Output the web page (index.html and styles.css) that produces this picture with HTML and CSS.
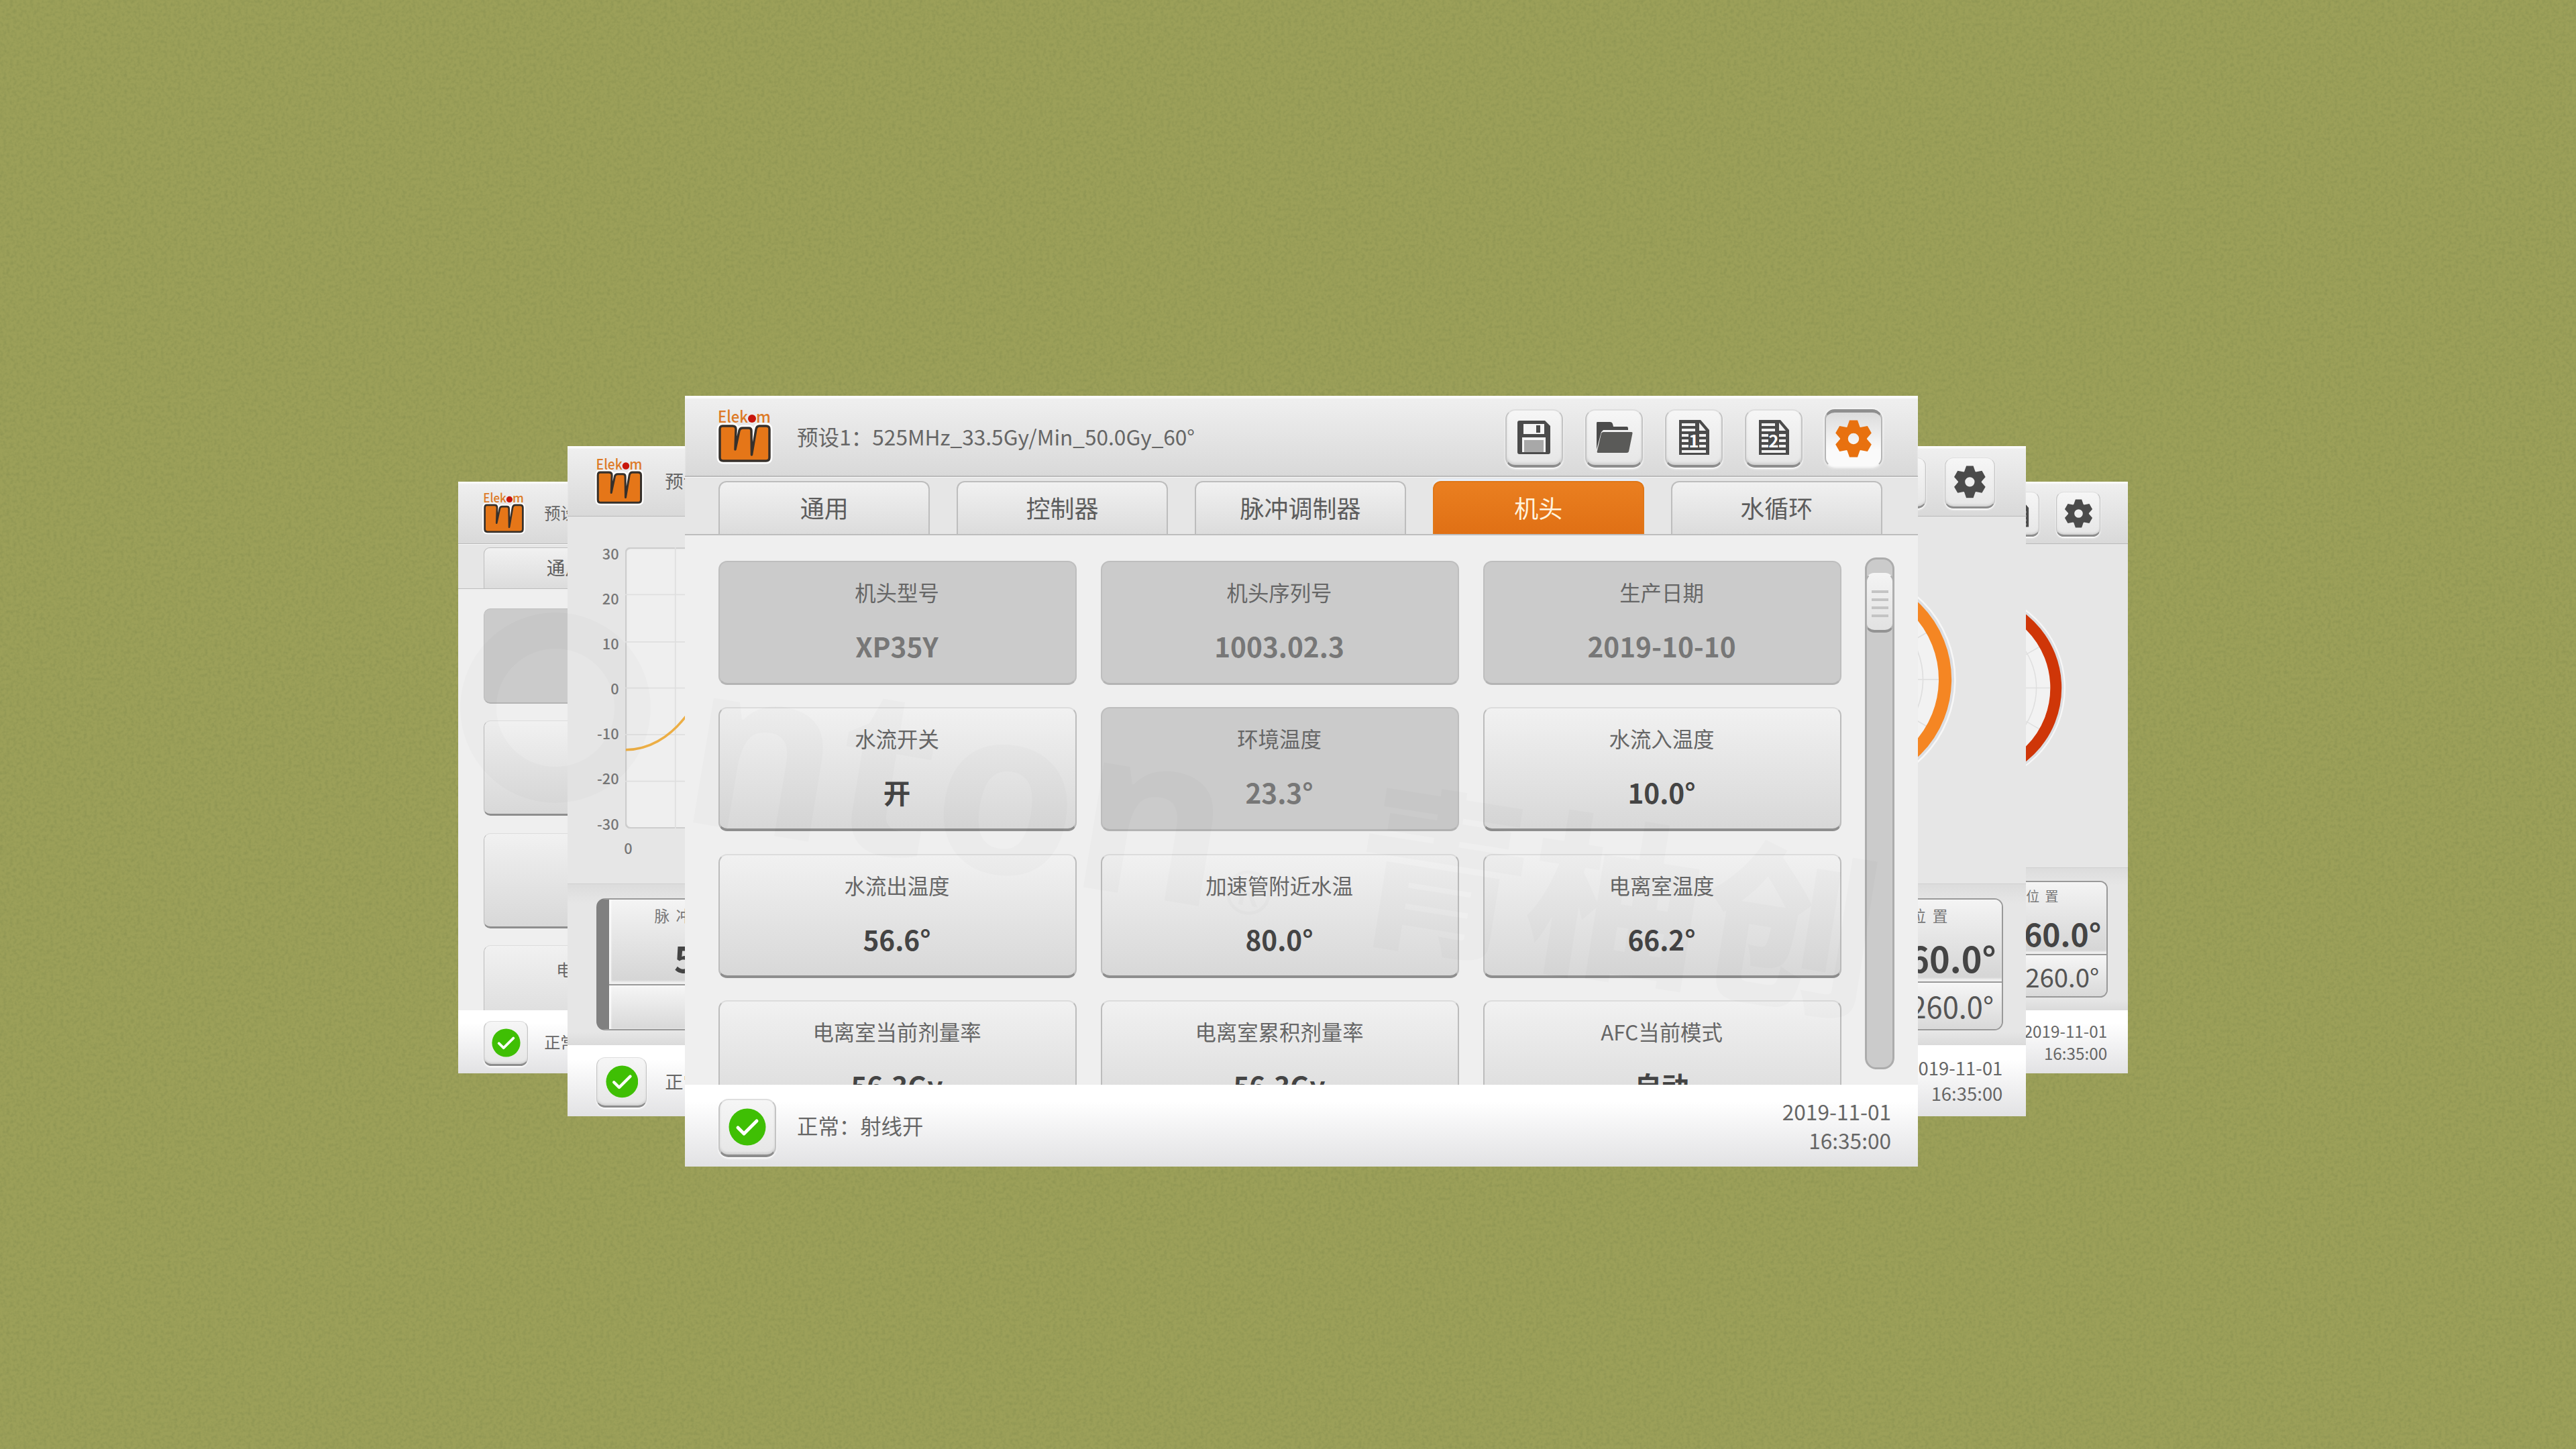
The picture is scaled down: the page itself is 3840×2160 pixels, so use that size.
FILE: index.html
```html
<!DOCTYPE html>
<html lang="zh-CN">
  <head>
    <meta charset="UTF-8" />
    <meta name="viewport" content="width=device-width, initial-scale=1.0" />
    <title>Elekom</title>
    <link rel="stylesheet" href="styles.css">
  </head>
  <body>
    <!-- icons -->
    <svg class="defs" width="0" height="0">
      <symbol id="logo" viewBox="-4 0 86 80" overflow="visible">
        <path d="M6 22H21Q26 22 26 27L25 57L31 29Q32 25 36 25H45Q49 25 49 29L49.500 65L56 27Q57 22 61 22H71Q76 22 76 27V69Q76 74 71 74H7Q2 74 2 69V27Q2 22 6 22Z" fill="none" stroke="#fff" stroke-width="9" stroke-linejoin="round" />
        <path d="M6 22H21Q26 22 26 27L25 57L31 29Q32 25 36 25H45Q49 25 49 29L49.500 65L56 27Q57 22 61 22H71Q76 22 76 27V69Q76 74 71 74H7Q2 74 2 69V27Q2 22 6 22Z" fill="#e57618" stroke="#36302b" stroke-width="3.500" stroke-linejoin="round" />
        <circle cx="50" cy="11" r="6" fill="#c8160c" />
      </symbol>
      <symbol id="save" viewBox="0 0 56 56">
        <path d="M6 3H44L52 11V50Q52 53 49 53H6Q3 53 3 50V6Q3 3 6 3Z" fill="#4b4b4b" />
        <path d="M12 8H43V23H12Z" fill="#f4f4f4" />
        <rect x="31" y="10" width="6" height="11" fill="#4b4b4b" />
        <rect x="10" y="28" width="35" height="22" fill="#f4f4f4" />
        <rect x="13" y="32" width="29" height="18" fill="#a8a8a8" />
      </symbol>
      <symbol id="folder" viewBox="0 0 56 56">
        <path d="M3 5H22Q25 5 26 8L27 12H47Q49 12 49 15V17H12L9 20L2 46V7Q2 5 3 5Z" fill="#4b4b4b" />
        <path d="M12 20H54Q56 20 55.500 22L50 49Q49.500 51 47 51H4Q2 51 3 48L9 22Q10 20 12 20Z" fill="#5a5a58" />
      </symbol>
      <symbol id="doc" viewBox="0 0 56 56">
        <path d="M6 2H38L51 17V54H6Z" fill="#4b4b4b" />
        <path d="M10 7H30V11H10ZM10 15H30V19H10ZM10 23H46V27H10ZM10 31H46V35H10ZM10 39H46V43H10ZM10 47H46V51H10Z" fill="#f1f1f1" />
        <path d="M36 6V18H46Z" fill="#f1f1f1" />
        <path d="M20 22H36V44H20Z" fill="#4b4b4b" />
      </symbol>
      <symbol id="gear" viewBox="-28 -28 56 56">
        <circle r="14" fill="none" stroke="currentColor" stroke-width="11.500" />
        <g fill="currentColor">
          <path id="tooth" d="M-10 -16L-6 -27.500H6L10 -16Z" />
          <use href="#tooth" transform="rotate(60)" />
          <use href="#tooth" transform="rotate(120)" />
          <use href="#tooth" transform="rotate(180)" />
          <use href="#tooth" transform="rotate(240)" />
          <use href="#tooth" transform="rotate(300)" />
        </g>
      </symbol>
      <symbol id="ok" viewBox="0 0 56 56">
        <circle cx="28" cy="28" r="27.500" fill="#3fbf04" />
        <path d="M14 29L23 38L42 19" fill="none" stroke="#fff" stroke-width="5" stroke-linecap="round" stroke-linejoin="round" />
      </symbol>
      <filter id="grain" x="0" y="0" width="100%" height="100%" color-interpolation-filters="sRGB">
        <feTurbulence type="fractalNoise" baseFrequency="0.200" numOctaves="2" seed="4" />
        <feColorMatrix values="0 0 0 0 .5  0 0 0 0 .54  0 0 0 0 .3  1.8 0 0 0 -.7" />
      </filter>
    </svg>

    <svg class="grain" width="3840" height="2160"><rect width="3840" height="2160" filter="url(#grain)" /></svg>

    <!-- back left: settings -->
    <section class="window window-back-left">
      <header class="topbar">
        <svg class="logo" viewBox="-4 0 86 80">
          <use href="#logo" x="-4" width="86" height="80" />
          <text x="-1" y="17" textLength="45" lengthAdjust="spacingAndGlyphs">Elek</text>
          <text x="56" y="17" textLength="22" lengthAdjust="spacingAndGlyphs">m</text>
        </svg>
        <p class="preset">预设</p>
      </header>
      <nav class="tabs">
        <a class="tab">通用</a>
      </nav>
      <div class="content">
        <div class="cards">
          <div class="card card-off"></div>
          <div class="card card-off"></div>
          <div class="card card-off"></div>
          <div class="card"></div>
          <div class="card"></div>
          <div class="card"></div>
          <div class="card"></div>
          <div class="card"></div>
          <div class="card"></div>
          <div class="card"><span class="label">电离室当前剂量率</span></div>
          <div class="card"></div>
          <div class="card"></div>
        </div>
      </div>
      <footer class="statusbar">
        <span class="btn"><svg><use href="#ok" /></svg></span>
        <p class="status">正常</p>
      </footer>
    </section>

    <!-- back right: gauge -->
    <section class="window window-back-right">
      <header class="topbar">
        <div class="tools">
          <span class="btn"><svg><use href="#doc" /></svg></span>
          <span class="btn"><svg><use href="#gear" /></svg></span>
        </div>
      </header>
      <div class="monitor monitor-right">
        <svg class="gauge gauge-red" viewBox="-200 -200 400 400">
          <circle class="halo" r="188" />
          <circle class="dial" r="170" />
          <circle class="grid" r="133" />
          <path class="grid" d="M-160 0H160M-80 -139L80 139M-80 139L80 -139M-139 -80L139 80M-139 80L139 -80" />
          <circle class="ring" r="171" />
        </svg>
      </div>
      <div class="readouts">
        <div class="readout readout-right">
          <div class="actual"><span class="name">位置</span><b>60.0°</b></div>
          <div class="target">260.0°</div>
        </div>
      </div>
      <footer class="statusbar">
        <p class="clock">2019-11-01<br>16:35:00</p>
      </footer>
    </section>

    <!-- middle right: gauge -->
    <section class="window window-mid-right">
      <header class="topbar">
        <div class="tools">
          <span class="btn"><svg><use href="#doc" /></svg></span>
          <span class="btn"><svg><use href="#gear" /></svg></span>
        </div>
      </header>
      <div class="monitor monitor-right">
        <svg class="gauge gauge-orange" viewBox="-200 -200 400 400">
          <circle class="halo" r="188" />
          <circle class="dial" r="170" />
          <circle class="grid" r="133" />
          <path class="grid" d="M-160 0H160M-80 -139L80 139M-80 139L80 -139M-139 -80L139 80M-139 80L139 -80" />
          <circle class="ring" r="171" />
        </svg>
      </div>
      <div class="readouts">
        <div class="readout readout-right">
          <div class="actual"><span class="name">位置</span><b>60.0°</b></div>
          <div class="target">260.0°</div>
        </div>
      </div>
      <footer class="statusbar">
        <p class="clock">2019-11-01<br>16:35:00</p>
      </footer>
    </section>

    <!-- middle left: chart -->
    <section class="window window-mid-left">
      <header class="topbar">
        <svg class="logo" viewBox="-4 0 86 80">
          <use href="#logo" x="-4" width="86" height="80" />
          <text x="-1" y="17" textLength="45" lengthAdjust="spacingAndGlyphs">Elek</text>
          <text x="56" y="17" textLength="22" lengthAdjust="spacingAndGlyphs">m</text>
        </svg>
        <p class="preset">预设</p>
      </header>
      <div class="monitor">
        <div class="axis">
          <span>30</span><span>20</span><span>10</span><span>0</span><span>-10</span><span>-20</span><span>-30</span>
        </div>
        <div class="plot-col">
          <svg class="plot" width="700" height="482" viewBox="0 0 700 482">
            <rect x="1" y="1" width="698" height="480" rx="8" />
            <path class="grid" d="M0 81H700M0 162H700M0 241H700M0 321H700M0 401H700M86 0V482M171 0V482M256 0V482" />
            <path class="line" d="M1 347C40 347 75 326 102 292C125 266 150 230 180 190" />
          </svg>
          <span class="origin">0</span>
        </div>
      </div>
      <div class="readouts">
        <div class="readout">
          <div class="actual"><span class="name">脉冲</span><b>56.3</b></div>
          <div class="target"></div>
        </div>
      </div>
      <footer class="statusbar">
        <span class="btn"><svg><use href="#ok" /></svg></span>
        <p class="status">正常</p>
      </footer>
    </section>

    <!-- front: settings -->
    <section class="window window-front">
      <header class="topbar">
        <svg class="logo" viewBox="-4 0 86 80">
          <use href="#logo" x="-4" width="86" height="80" />
          <text x="-1" y="17" textLength="45" lengthAdjust="spacingAndGlyphs">Elek</text>
          <text x="56" y="17" textLength="22" lengthAdjust="spacingAndGlyphs">m</text>
        </svg>
        <p class="preset">预设1：525MHz_33.5Gy/Min_50.0Gy_60°</p>
        <div class="tools">
          <span class="btn"><svg><use href="#save" /></svg></span>
          <span class="btn"><svg><use href="#folder" /></svg></span>
          <span class="btn"><svg><use href="#doc" /><text class="doc-no" x="28" y="43">1</text></svg></span>
          <span class="btn"><svg><use href="#doc" /><text class="doc-no" x="28" y="43">2</text></svg></span>
          <span class="btn btn-active"><svg><use href="#gear" /></svg></span>
        </div>
      </header>
      <nav class="tabs">
        <a class="tab">通用</a>
        <a class="tab">控制器</a>
        <a class="tab">脉冲调制器</a>
        <a class="tab tab-active">机头</a>
        <a class="tab">水循环</a>
      </nav>
      <div class="content">
        <div class="cards">
          <div class="card card-off"><span class="label">机头型号</span><span class="value">XP35Y</span></div>
          <div class="card card-off"><span class="label">机头序列号</span><span class="value">1003.02.3</span></div>
          <div class="card card-off"><span class="label">生产日期</span><span class="value">2019-10-10</span></div>
          <div class="card"><span class="label">水流开关</span><span class="value">开</span></div>
          <div class="card card-off"><span class="label">环境温度</span><span class="value">23.3°</span></div>
          <div class="card"><span class="label">水流入温度</span><span class="value">10.0°</span></div>
          <div class="card"><span class="label">水流出温度</span><span class="value">56.6°</span></div>
          <div class="card"><span class="label">加速管附近水温</span><span class="value">80.0°</span></div>
          <div class="card"><span class="label">电离室温度</span><span class="value">66.2°</span></div>
          <div class="card"><span class="label">电离室当前剂量率</span><span class="value">56.3Gy</span></div>
          <div class="card"><span class="label">电离室累积剂量率</span><span class="value">56.3Gy</span></div>
          <div class="card"><span class="label">AFC当前模式</span><span class="value">自动</span></div>
        </div>
        <div class="scrollbar">
          <div class="thumb"><i></i><i></i><i></i><i></i></div>
        </div>
      </div>
      <footer class="statusbar">
        <span class="btn"><svg><use href="#ok" /></svg></span>
        <p class="status">正常：射线开</p>
        <p class="clock">2019-11-01<br>16:35:00</p>
      </footer>
    </section>

    <!-- watermark -->
    <svg class="watermark" width="3840" height="2160">
      <circle cx="828" cy="1055" r="115" />
      <g transform="translate(1008 1222) rotate(9.400)">
        <text class="mark-latin" x="0" y="0">nton</text>
        <text class="mark-reg" x="822" y="0">®</text>
      </g>
      <text class="mark-cjk" transform="translate(2005 1380) rotate(9)">青柚创</text>
    </svg>
  </body>
</html>
```
FILE: styles.css
```css
body {
  position: relative;
  width: 3840px;
  height: 2160px;
  margin: 0;
  overflow: hidden;
  background: #9ca059;
  color: #666;
  font-family: "Noto Sans CJK SC", sans-serif;
}

p {
  margin: 0;
}

.defs {
  position: absolute;
}

.grain,
.watermark {
  position: absolute;
  top: 0;
  left: 0;
}

.grain {
  opacity: 0.5;
}

/* windows */
.window {
  position: absolute;
  display: flex;
  flex-direction: column;
  width: 1838px;
  height: 1149px;
  overflow: hidden;
  background: #efefef;
}

.window-front {
  left: 1021px;
  top: 590px;
}

.window-mid-left,
.window-mid-right {
  top: calc(665px / 0.8695);
  zoom: 0.8695;
  background: #e6e6e6;
}

.window-mid-left {
  left: calc(846px / 0.8695);
}

.window-mid-right {
  left: calc(1422px / 0.8695);
}

.window-back-left,
.window-back-right {
  top: calc(718px / 0.7676);
  zoom: 0.7676;
}

.window-back-left {
  left: calc(683px / 0.7676);
}

.window-back-right {
  left: calc(1761px / 0.7676);
  background: #e6e6e6;
}

/* top bar */
.topbar {
  box-sizing: border-box;
  flex: none;
  display: flex;
  align-items: center;
  height: 121px;
  padding: 0 53px 0 46px;
  background: linear-gradient(#f0f0f0, #d9d9d9);
  border-bottom: 2px solid #b9b9b9;
  box-shadow: inset 0 4px 2px #fbfbfb;
}

.logo {
  width: 86px;
  height: 80px;
  margin-top: 7px;
  overflow: visible;
}

.logo text {
  font-size: 24px;
  font-weight: 500;
  fill: #dd7a26;
}

.preset {
  margin-left: 35px;
  font-size: 31.6px;
  line-height: 48px;
  white-space: nowrap;
}

.tools {
  display: flex;
  gap: 33px;
  margin-left: auto;
}

.btn {
  box-sizing: border-box;
  display: flex;
  align-items: center;
  justify-content: center;
  width: 86px;
  height: 87px;
  margin-top: 7px;
  padding-bottom: 1px;
  border: 2px solid #c4c4c4;
  border-top-color: #dedede;
  border-bottom: 4px solid #8d8d8d;
  border-radius: 15px;
  background: linear-gradient(#f6f6f6, #e6e6e6);
  box-shadow: 0 2px 3px #fff, inset 0 -3px 3px #d3d3d3;
  color: #4b4b4b;
}

.btn svg {
  width: 56px;
  height: 56px;
}

.btn-active {
  padding: 0 0 2px;
  border: 2px solid #b5b5b5;
  border-top: 5px solid #8f8f8f;
  border-bottom-color: #f4f4f4;
  background: linear-gradient(#dcdcdc, #fafafa 70%);
  box-shadow: 0 0 4px #fff;
  color: #e8710f;
}

.doc-no {
  font-size: 26px;
  font-weight: 700;
  text-anchor: middle;
  fill: #fff;
}

/* tabs */
.tabs {
  box-sizing: border-box;
  flex: none;
  display: flex;
  gap: 39.5px;
  height: 87px;
  padding: 5px 50px 0;
  background: #e6e6e6;
  border-top: 1px solid #f8f8f8;
  border-bottom: 2px solid #bdbdbd;
}

.tab {
  box-sizing: border-box;
  flex: none;
  width: 315.4px;
  border: 2px solid #bdbdbd;
  border-bottom: 0;
  border-radius: 12px 12px 0 0;
  background: linear-gradient(#f1f1f1, #dcdcdc);
  color: #5c5c5c;
  font-size: 36px;
  line-height: 74px;
  text-align: center;
}

.tab-active {
  border-color: #e07818;
  background: linear-gradient(#ea7f20, #e07015);
  box-shadow: 0 -3px 2px #e6effa;
  color: #fff3dd;
}

/* settings */
.content {
  flex: 1;
  display: flex;
  min-height: 0;
  overflow: hidden;
  padding: 38px 35px 0 50px;
}

.cards {
  flex: none;
  display: grid;
  grid-template-columns: repeat(3, 534px);
  grid-auto-rows: 185px;
  gap: 33.3px 36px;
  height: 0;
}

.card {
  box-sizing: border-box;
  display: flex;
  flex-direction: column;
  align-items: center;
  padding: 25px 2px 0 0;
  border: 2px solid #bcbcbc;
  border-top-color: #dcdcdc;
  border-bottom: 4px solid #8e8e8e;
  border-radius: 13px;
  background: linear-gradient(#f1f1f1, #d8d8d8);
}

.card-off {
  border: 2px solid #bebebe;
  border-bottom: 3px solid #b4b4b4;
  background: #cbcbcb;
}

.label {
  font-size: 31.4px;
  line-height: 40px;
}

.value {
  margin-top: 30px;
  color: #444;
  font-size: 40.5px;
  font-weight: 700;
  line-height: 60px;
}

.card-off .value {
  color: #777;
}

.scrollbar {
  box-sizing: border-box;
  width: 44px;
  height: 763px;
  margin: -5px 0 0 auto;
  padding-top: 20px;
  border: 3px solid #acacac;
  border-radius: 17px;
  background: #cbcbcb;
}

.thumb {
  box-sizing: border-box;
  display: flex;
  flex-direction: column;
  align-items: center;
  gap: 8px;
  height: 89px;
  margin: 0 -2px;
  padding-top: 24px;
  border: 2px solid #b0b0b0;
  border-top-color: #f4f4f4;
  border-bottom: 4px solid #939393;
  border-radius: 13px;
  background: linear-gradient(#f3f3f3, #e2e2e2);
}

.thumb i {
  width: 25px;
  height: 4px;
  background: #c4c4c4;
}

/* status bar */
.statusbar {
  box-sizing: border-box;
  flex: none;
  display: flex;
  align-items: center;
  height: 122px;
  padding: 0 40px 1px 50px;
  background: linear-gradient(#fff 20%, #e2e2e4);
}

.status {
  margin-left: 31px;
  font-size: 31.4px;
}

.clock {
  margin-left: auto;
  font-size: 31.6px;
  line-height: 43px;
  text-align: right;
}

/* monitor */
.monitor {
  box-sizing: border-box;
  display: flex;
  height: 630px;
  padding-top: 48px;
  border-bottom: 2px solid #cfcfcf;
}

.axis {
  display: flex;
  flex-direction: column;
  justify-content: space-between;
  width: 88px;
  height: 493px;
  color: #777;
  font-size: 25px;
  font-weight: 500;
  line-height: 30px;
  text-align: right;
}

.plot-col {
  display: flex;
  flex-direction: column;
  margin: 5px 0 0 11px;
}

.plot rect {
  fill: #efefef;
  stroke: #cdcdcd;
  stroke-width: 3;
}

.grid {
  fill: none;
  stroke: #dfdfdf;
  stroke-width: 2;
}

.line {
  fill: none;
  stroke: #ecae45;
  stroke-width: 4;
}

.origin {
  margin: 16px 0 0 -2px;
  color: #777;
  font-size: 25px;
  font-weight: 500;
  line-height: 34px;
}

.monitor-right {
  justify-content: flex-end;
  padding: 79px 110px 0 0;
}

.gauge {
  width: 400px;
  height: 400px;
}

.halo {
  fill: #dcdee2;
  stroke: #f7f7f7;
  stroke-width: 3;
}

.dial {
  fill: #f2f2f2;
  stroke: #fff;
}

.ring {
  fill: none;
  stroke-width: 22;
}

.gauge-orange .ring {
  stroke: #f58623;
}

.gauge-red .ring {
  stroke: #cf3608;
}

.readouts {
  box-sizing: border-box;
  flex: none;
  height: 276px;
  padding: 24px 39px 25px 50px;
  background: linear-gradient(#dcdcdc, #e6e6e6 12%, #e6e6e6 92%, #dadada);
}

.readout {
  box-sizing: border-box;
  display: flex;
  flex-direction: column;
  height: 227px;
  border: 3px solid #999;
  border-left: 23px solid #808080;
  border-radius: 15px;
  overflow: hidden;
}

.actual {
  box-sizing: border-box;
  display: flex;
  flex-direction: column;
  height: 147px;
  padding: 8px 0 0 77px;
  border-bottom: 3px solid #999;
  background: linear-gradient(#f4f4f4, #d4d4d4);
  box-shadow: inset 0 -5px 3px #f0f0f0, inset 3px 0 3px #fff;
}

.actual b {
  margin: 12px 0 0 34px;
  color: #444;
  font-size: 60px;
  line-height: 80px;
}

.name {
  color: #777;
  font-size: 26px;
  line-height: 40px;
  letter-spacing: 11px;
}

.target {
  flex: 1;
  background: linear-gradient(#f6f6f6, #d8d8d8);
  box-shadow: inset 3px 0 3px #fff;
  color: #555;
  font-size: 50px;
  line-height: 81px;
}

.readout-right {
  text-align: right;
}

.readout-right .name {
  padding-right: 82px;
}

.readout-right b {
  margin-right: 10px;
}

.readout-right .target {
  padding-right: 14px;
}

/* watermark */
.watermark text {
  fill: #000;
  fill-opacity: 0.016;
}

.watermark circle {
  fill: none;
  stroke: #000;
  stroke-opacity: 0.016;
  stroke-width: 54;
}

.mark-latin {
  font-family: "Noto Sans", sans-serif;
  font-size: 345px;
  font-weight: 700;
}

.mark-reg {
  font-family: "Noto Sans", sans-serif;
  font-size: 90px;
}

.mark-cjk {
  font-size: 262px;
  font-weight: 900;
}
```
